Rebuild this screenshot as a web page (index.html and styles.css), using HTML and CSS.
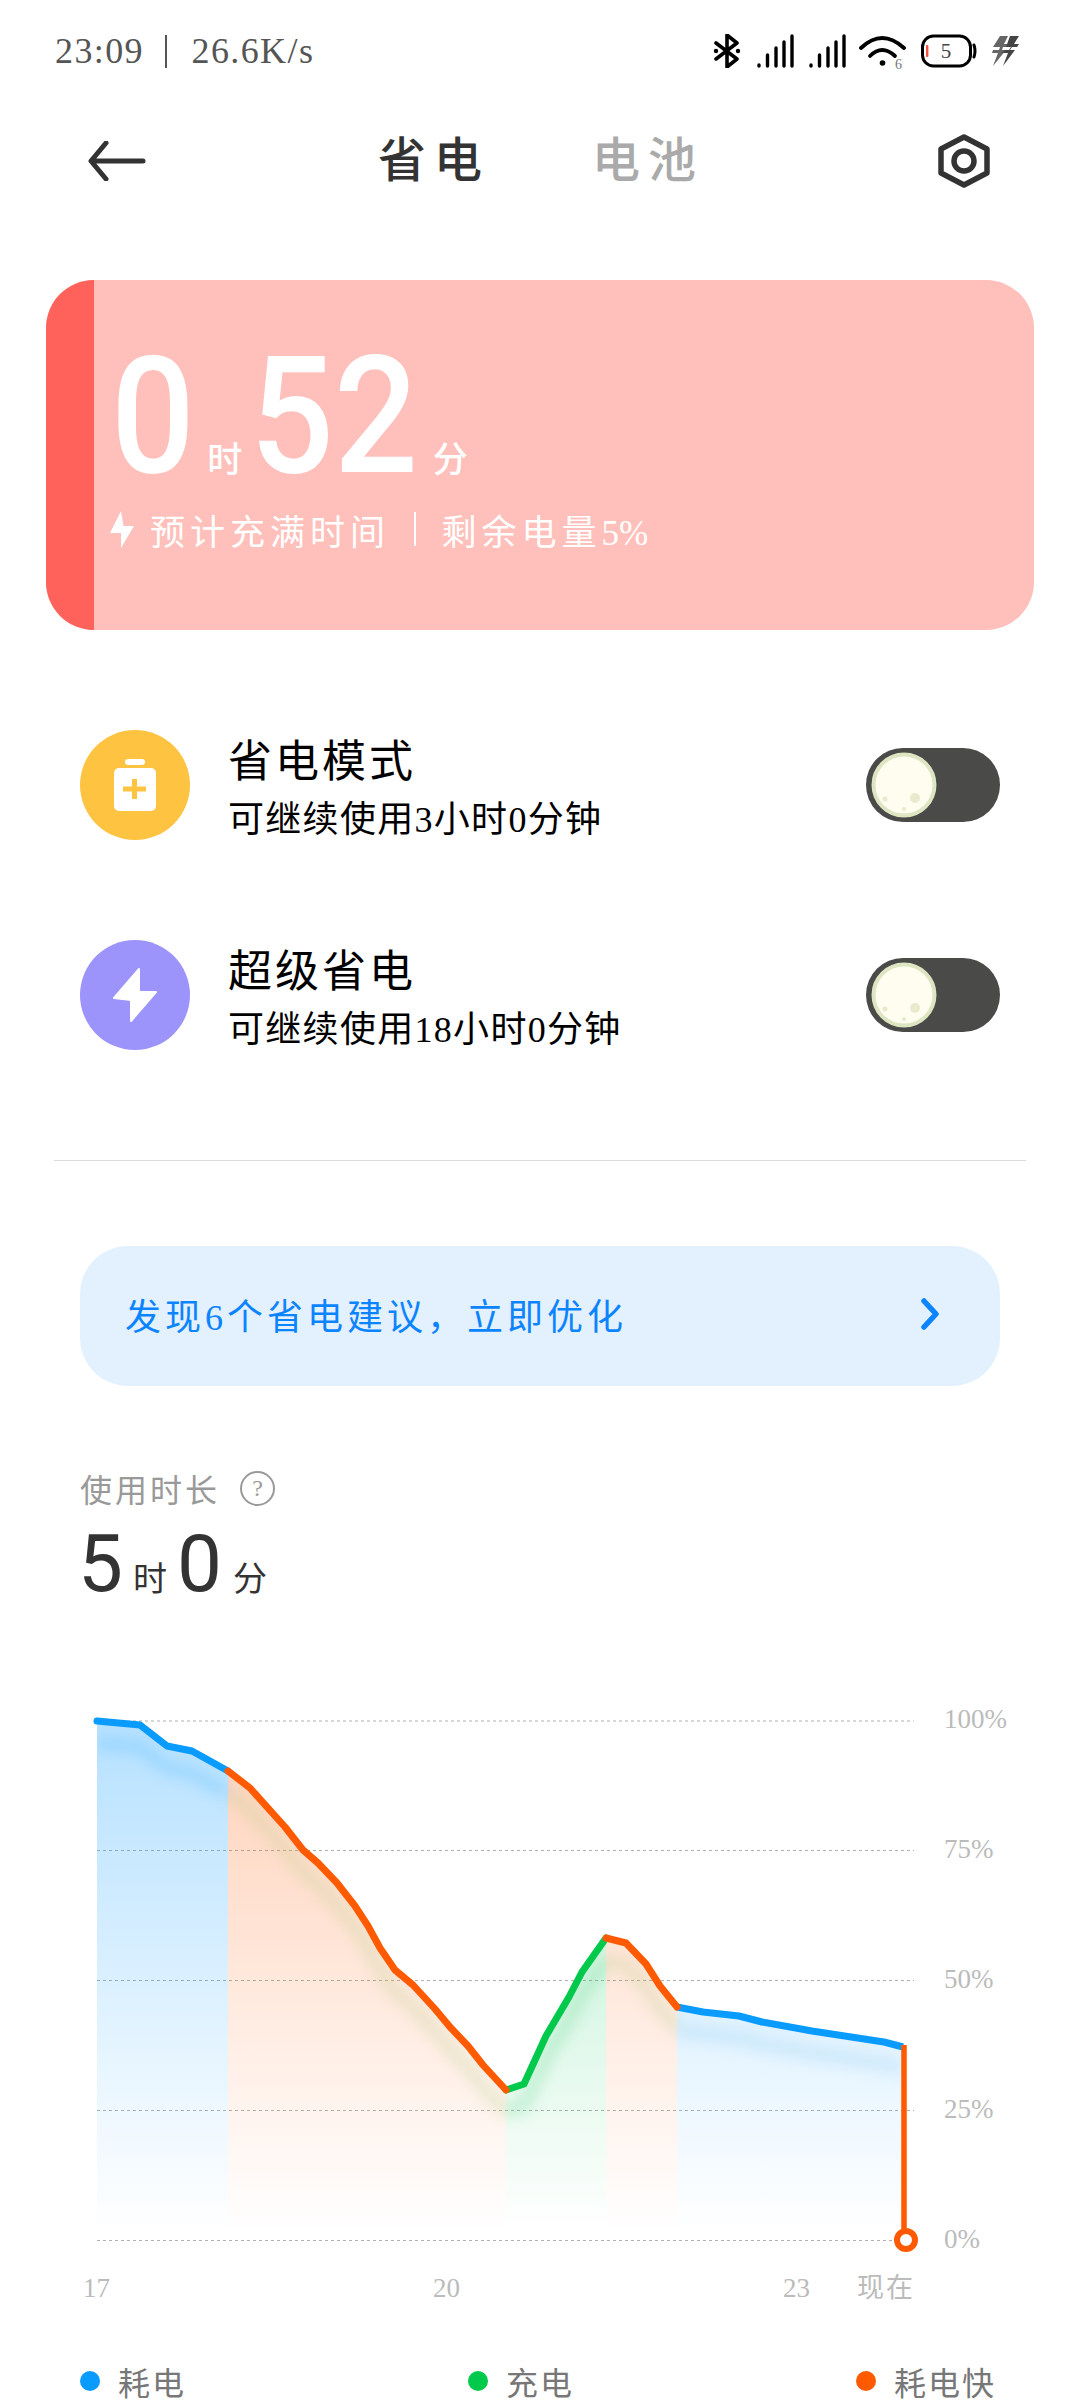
FILE: index.html
```html
<!DOCTYPE html>
<html lang="zh">
<head>
<meta charset="utf-8">
<title>省电</title>
<link rel="stylesheet" href="styles.css">
</head>
<body>
<div class="page">
  <header class="status">
    <div class="status-left"><span>23:09</span><i class="status-sep"></i><span>26.6K/s</span></div>
    <div class="status-right">
      <svg class="ico-bt" width="30" height="34" viewBox="0 0 30 34"><path d="M4 9 L25 25 L15 33 V1 L25 9 L4 25" fill="none" stroke="#000" stroke-width="3.6" stroke-linejoin="round" stroke-linecap="round"/><circle cx="4" cy="17" r="2.2"/><circle cx="26" cy="17" r="2.2"/></svg>
      <svg class="ico-sig" width="37" height="34" viewBox="0 0 37 34"><g stroke="#000" stroke-width="3.4" stroke-linecap="round"><path d="M2 31 V32"/><path d="M10.500 21 V32"/><path d="M19 14 V32"/><path d="M27 8 V32"/><path d="M35 2 V32"/></g></svg>
      <svg class="ico-sig" width="37" height="34" viewBox="0 0 37 34"><g stroke="#000" stroke-width="3.4" stroke-linecap="round"><path d="M2 31 V32"/><path d="M10.500 21 V32"/><path d="M19 14 V32"/><path d="M27 8 V32"/><path d="M35 2 V32"/></g></svg>
      <svg class="ico-wifi" width="48" height="40" viewBox="0 0 48 40"><g fill="none" stroke="#000" stroke-width="3.800" stroke-linecap="round"><path d="M2 14 Q23 -6 45 14"/><path d="M11 22 Q23 10 36 22"/></g><circle cx="23.500" cy="29" r="2.800"/><text class="wifi-num" x="36" y="35">6</text></svg>
      <svg class="ico-batt" width="56" height="34" viewBox="0 0 56 34"><rect x="1.500" y="2" width="48" height="30" rx="11" fill="#fff" stroke="#000" stroke-width="3"/><rect x="5" y="11" width="2.400" height="12" rx="1" fill="#f0533f"/><text class="batt-num" x="25" y="24">5</text><path d="M53 11 Q55 17 53 23" fill="none" stroke="#000" stroke-width="3" stroke-linecap="round"/></svg>
      <svg class="ico-charge" width="27" height="30" viewBox="0 0 27 30"><path d="M8 0 h8 l-4 8 h4 l-1 3 h-4 l-1 3 h4 L1 30 l5-13 h-6 l1-3 h6 l1-3 h-7 z" fill="#666"/><path d="M18 0 h9 l-5 8 h5 l-2 3 h-5 l-2 3 h5 L11 30 l5-13 h-6 l3-3 h4 l2-3 h-5 z" fill="#444"/></svg>
    </div>
  </header>

  <nav class="nav">
    <svg width="58" height="40" viewBox="0 0 58 40"><path d="M55 20 H4 M18 2 L3 20 L18 38" fill="none" stroke="#333" stroke-width="5" stroke-linecap="round" stroke-linejoin="round"/></svg>
    <div class="tabs"><span class="tab tab-on">省电</span><span class="tab">电池</span></div>
    <svg width="52" height="54" viewBox="0 0 52 54"><path d="M26 3 L49 15 V39 L26 51 L3 39 V15 Z" fill="none" stroke="#333" stroke-width="5.500" stroke-linejoin="round"/><circle cx="26" cy="27" r="10" fill="none" stroke="#333" stroke-width="5.500"/></svg>
  </nav>

  <section class="hero">
    <div class="hero-band"></div>
    <div class="hero-main">
      <div class="hero-time">
        <span class="hero-num">0</span><span class="hero-unit">时</span><span class="hero-num hero-num-b">52</span><span class="hero-unit hero-unit-b">分</span>
      </div>
      <div class="hero-sub">
        <svg width="24" height="37" viewBox="0 0 24 37"><path d="M11 0 L0 22 H11 V37 L24 15 H13.500 Z" fill="#fff"/></svg>
        <span class="hero-sub-a">预计充满时间</span><i class="hero-sep"></i><span>剩余电量<span class="hero-pct">5%</span></span>
      </div>
    </div>
  </section>

  <section class="modes">
    <div class="mode">
      <div class="mode-ico mode-ico-y">
        <svg width="110" height="110" viewBox="0 0 110 110"><rect x="45" y="29" width="20" height="6" rx="3" fill="#fff"/><rect x="34" y="38" width="42" height="43" rx="5" fill="#fff"/><path d="M43 59 H66 M54.500 49 V69" stroke="#ffc342" stroke-width="5"/></svg>
      </div>
      <div class="mode-text"><div class="mode-title">省电模式</div><div class="mode-sub">可继续使用3小时0分钟</div></div>
      <div class="toggle"><svg width="66" height="66" viewBox="0 0 66 66"><circle cx="33" cy="33" r="30.500" fill="#fffdf0" stroke="#dde5c2" stroke-width="4"/><circle cx="44" cy="46" r="5" fill="#e9e9cc"/><circle cx="14" cy="47" r="2.500" fill="#e9e9cc"/><circle cx="33" cy="57" r="2" fill="#e9e9cc"/></svg></div>
    </div>
    <div class="mode">
      <div class="mode-ico mode-ico-p">
        <svg width="110" height="110" viewBox="0 0 110 110"><path d="M59 29 L34 58 L51 60 V81 L76 52 H59 Z" fill="#fff" stroke="#fff" stroke-width="2" stroke-linejoin="round"/></svg>
      </div>
      <div class="mode-text"><div class="mode-title">超级省电</div><div class="mode-sub">可继续使用18小时0分钟</div></div>
      <div class="toggle"><svg width="66" height="66" viewBox="0 0 66 66"><circle cx="33" cy="33" r="30.500" fill="#fffdf0" stroke="#dde5c2" stroke-width="4"/><circle cx="44" cy="46" r="5" fill="#e9e9cc"/><circle cx="14" cy="47" r="2.500" fill="#e9e9cc"/><circle cx="33" cy="57" r="2" fill="#e9e9cc"/></svg></div>
    </div>
  </section>

  <hr class="divider">

  <div class="banner">
    <span>发现6个省电建议，立即优化</span>
    <svg width="20" height="32" viewBox="0 0 20 32"><path d="M4 3 L16 16 L4 29" fill="none" stroke="#0d84ff" stroke-width="5.500" stroke-linecap="round" stroke-linejoin="round"/></svg>
  </div>

  <section class="usage">
    <div class="usage-label"><span>使用时长</span>
      <span class="usage-q">?</span></div>
    <div class="usage-time"><span class="usage-num">5</span><span class="usage-unit">时</span><span class="usage-num usage-num-b">0</span><span class="usage-unit usage-unit-b">分</span></div>
  </section>

  <svg class="chart" width="1080" height="630" viewBox="0 1700 1080 630">
    <defs>
      <linearGradient id="gb" gradientUnits="userSpaceOnUse" x1="0" y1="1720" x2="0" y2="2235"><stop offset="0" stop-color="#0a9bff" stop-opacity=".3"/><stop offset="1" stop-color="#0a9bff" stop-opacity="0"/></linearGradient>
      <linearGradient id="go" gradientUnits="userSpaceOnUse" x1="0" y1="1720" x2="0" y2="2235"><stop offset="0" stop-color="#ff5a00" stop-opacity=".28"/><stop offset="1" stop-color="#ff5a00" stop-opacity="0"/></linearGradient>
      <linearGradient id="gg" gradientUnits="userSpaceOnUse" x1="0" y1="1720" x2="0" y2="2235"><stop offset="0" stop-color="#00c853" stop-opacity=".32"/><stop offset="1" stop-color="#00c853" stop-opacity="0"/></linearGradient>
      <filter id="soft" x="-10%" y="-10%" width="120%" height="120%"><feGaussianBlur stdDeviation="7"/></filter>
      <clipPath id="under"><path d="M97 1722 L140 1726 L167 1747 L192 1752 L228 1772 L250 1789 L285 1828 L303 1851 L318 1864 L337 1884 L355 1907 L368 1927 L380 1949 L395 1971 L413 1986 L435 2010 L450 2028 L468 2047 L483 2066 L506 2091 L524 2085 L546 2037 L569 1998 L582 1973 L606 1939 L626 1944 L646 1965 L660 1987 L677 2008 L703 2013 L739 2017 L762 2023 L812 2032 L884 2043 L903 2048 V2235 H97 Z"/></clipPath>
    </defs>

    <g class="grid-lines">
      <path d="M97 1722 H914"/><path d="M97 1851.500 H914"/><path d="M97 1981.500 H914"/><path d="M97 2111.500 H914"/><path d="M97 2241.500 H894"/>
    </g>

    <path d="M97 1722 L140 1726 L167 1747 L192 1752 L228 1772 V2235 H97 Z" fill="url(#gb)"/>
    <path d="M228 1772 L250 1789 L285 1828 L303 1851 L318 1864 L337 1884 L355 1907 L368 1927 L380 1949 L395 1971 L413 1986 L435 2010 L450 2028 L468 2047 L483 2066 L506 2091 V2235 H228 Z" fill="url(#go)"/>
    <path d="M506 2091 L524 2085 L546 2037 L569 1998 L582 1973 L606 1939 V2235 H506 Z" fill="url(#gg)"/>
    <path d="M606 1939 L626 1944 L646 1965 L660 1987 L677 2008 V2235 H606 Z" fill="url(#go)"/>
    <path d="M677 2008 L703 2013 L739 2017 L762 2023 L812 2032 L884 2043 L903 2048 V2235 H677 Z" fill="url(#gb)"/>

    <g clip-path="url(#under)">
      <g filter="url(#soft)" transform="translate(0 22)" fill="none" stroke-width="12" opacity=".3">
        <path d="M97 1722 L140 1726 L167 1747 L192 1752 L228 1772" stroke="#4db8ff"/>
        <path d="M228 1772 L250 1789 L285 1828 L303 1851 L318 1864 L337 1884 L355 1907 L368 1927 L380 1949 L395 1971 L413 1986 L435 2010 L450 2028 L468 2047 L483 2066 L506 2091" stroke="#b5cf8a"/>
        <path d="M506 2091 L524 2085 L546 2037 L569 1998 L582 1973 L606 1939" stroke="#5ed68a"/>
        <path d="M606 1939 L626 1944 L646 1965 L660 1987 L677 2008" stroke="#b5cf8a"/>
        <path d="M677 2008 L703 2013 L739 2017 L762 2023 L812 2032 L884 2043 L903 2048" stroke="#8ccbf0"/>
      </g>
    </g>

    <g fill="none" stroke-width="7" stroke-linecap="round" stroke-linejoin="round">
      <path d="M97 1722 L140 1726 L167 1747 L192 1752 L228 1772" stroke="#0a9bff"/>
      <path d="M677 2008 L703 2013 L739 2017 L762 2023 L812 2032 L884 2043 L903 2048" stroke="#0a9bff" stroke-linecap="butt"/>
      <path d="M506 2091 L524 2085 L546 2037 L569 1998 L582 1973 L606 1939" stroke="#00c94b"/>
      <path d="M228 1772 L250 1789 L285 1828 L303 1851 L318 1864 L337 1884 L355 1907 L368 1927 L380 1949 L395 1971 L413 1986 L435 2010 L450 2028 L468 2047 L483 2066 L506 2091" stroke="#ff5a00"/>
      <path d="M606 1939 L626 1944 L646 1965 L660 1987 L677 2008" stroke="#ff5a00"/>
    </g>
    <path d="M904 2046 V2232" fill="none" stroke="#ff5a00" stroke-width="5.500"/>
    <circle cx="906" cy="2241" r="9" fill="#fff" stroke="#ff5a00" stroke-width="6"/>

    <g class="axis">
      <text x="944" y="1729">100%</text><text x="944" y="1859">75%</text><text x="944" y="1989">50%</text><text x="944" y="2119">25%</text><text x="944" y="2249">0%</text>
      <text x="83" y="2298">17</text><text x="433" y="2298">20</text><text x="783" y="2298">23</text><text x="857" y="2298" class="axis-cn">现在</text>
    </g>
  </svg>

  <footer class="legend">
    <div class="legend-item"><i class="dot dot-b"></i>耗电</div>
    <div class="legend-item"><i class="dot dot-g"></i>充电</div>
    <div class="legend-item"><i class="dot dot-o"></i>耗电快</div>
  </footer>
</div>
</body>
</html>
```
FILE: styles.css
```css
* { box-sizing: border-box; }
html, body { margin: 0; padding: 0; background: #fff; }
body { font-family: "Liberation Serif", "Noto Sans CJK SC", serif; }
.page { width: 1080px; height: 2400px; overflow: hidden; background: #fff; }

.status { height: 102px; display: flex; justify-content: space-between; align-items: center; padding: 0 61px 0 55px; }
.status-left { display: flex; align-items: center; font-size: 36px; letter-spacing: 1.4px; color: #555; }
.status-sep { width: 1.5px; height: 33px; background: #555; margin: 0 25px 0 21px; }
.status-right { display: flex; align-items: center; }
.ico-bt { margin-right: 15px; }
.ico-sig { margin-right: 15px; }
.ico-sig + .ico-wifi { margin-left: -2px; margin-right: 14px; margin-top: 6px; }
.ico-batt { margin-right: 15px; }
.wifi-num { font-size: 14px; fill: #777; }
.batt-num { font-size: 21px; fill: #444; text-anchor: middle; }

.nav { height: 118px; display: flex; justify-content: space-between; align-items: center; padding: 0 90px 0 88px; }
.tabs { display: flex; gap: 102px; margin: 0 0 10px -2px; }
.tab { font-family: "Noto Sans CJK SC", sans-serif; font-size: 48px; letter-spacing: 8px; line-height: 60px; color: #aaa; font-weight: 500; }
.tab-on { color: #333; }

.hero { margin: 60px 46px 0; height: 350px; display: flex; border-radius: 48px; overflow: hidden; background: #ffbfba; color: #fff; }
.hero-band { width: 48px; background: #ff625a; }
.hero-main { padding-left: 17px; }
.hero-time { display: flex; align-items: baseline; height: 210px; line-height: 272px; }
.hero-num { display: inline-block; font-family: Roboto, sans-serif; font-size: 164px; font-weight: 500; transform: scaleX(.9); transform-origin: 0 100%; }
.hero-num-b { margin-left: 8px; }
.hero-unit { font-family: "Noto Sans CJK SC", sans-serif; font-size: 35px; font-weight: 500; margin-left: 3px; }
.hero-unit-b { margin-left: -4px; }
.hero-sub { display: flex; align-items: center; height: 40px; margin: 19px 0 0 -1px; font-size: 35px; letter-spacing: 5px; }
.hero-sub svg { margin-right: 16px; }
.hero-sep { width: 1.5px; height: 34px; background: #fff; margin: 0 26px 0 24px; }
.hero-pct { letter-spacing: 0; }

.modes { padding: 50px 80px 0; }
.mode { height: 210px; display: flex; align-items: center; }
.mode-ico { width: 110px; height: 110px; border-radius: 50%; flex: none; }
.mode-ico-y { background: #ffc342; }
.mode-ico-p { background: #9d94fb; }
.mode-text { flex: 1; padding: 6px 0 0 38px; color: #000; }
.mode-title { font-size: 44px; letter-spacing: 3px; line-height: 58px; }
.mode-sub { font-size: 36px; letter-spacing: 1.3px; line-height: 46px; margin-top: 5px; }
.toggle { width: 134px; height: 74px; border-radius: 37px; background: #4a4a48; padding: 4px 0 0 5px; flex: none; }
.toggle svg { display: block; }

.divider { margin: 60px 54px 0; border: 0; height: 1px; background: #ddd; }

.banner { margin: 85px 80px 0; height: 140px; border-radius: 48px; background: #e3f1ff; display: flex; justify-content: space-between; align-items: center; padding: 0 60px 4px 45px; color: #0d84ff; font-size: 36px; letter-spacing: 4px; }

.usage { padding: 84px 80px 0; }
.usage-label { display: flex; align-items: center; gap: 20px; height: 36px; font-size: 32px; letter-spacing: 3px; color: #999; }
.usage-q { width: 35px; height: 35px; border: 2.5px solid #999; border-radius: 50%; display: flex; align-items: center; justify-content: center; font-size: 24px; letter-spacing: 0; }
.usage-time { display: flex; align-items: baseline; height: 80px; margin: 18px 0 0 -2px; line-height: 80px; color: #333; }
.usage-num { font-family: Roboto, sans-serif; font-size: 80px; }
.usage-num-b { margin-left: 10px; }
.usage-unit { font-family: "Noto Sans CJK SC", sans-serif; font-size: 34px; margin-left: 10px; }
.usage-unit-b { margin-left: 11px; }

.chart { display: block; margin-top: 95px; }
.grid-lines path { stroke: #b0b0b0; stroke-width: 1.2; stroke-dasharray: 3 3; fill: none; }
.axis text { font-size: 27px; fill: #bbb; }
.axis .axis-cn { letter-spacing: 2px; }

.legend { display: grid; grid-template-columns: 388px 388px 1fr; padding: 35px 0 0 80px; }
.legend-item { display: flex; align-items: center; height: 34px; font-size: 32px; letter-spacing: 2px; color: #777; }
.dot { width: 20px; height: 20px; border-radius: 50%; margin-right: 18px; }
.dot-b { background: #0a9bff; }
.dot-g { background: #00c94b; }
.dot-o { background: #ff5a00; }
```
